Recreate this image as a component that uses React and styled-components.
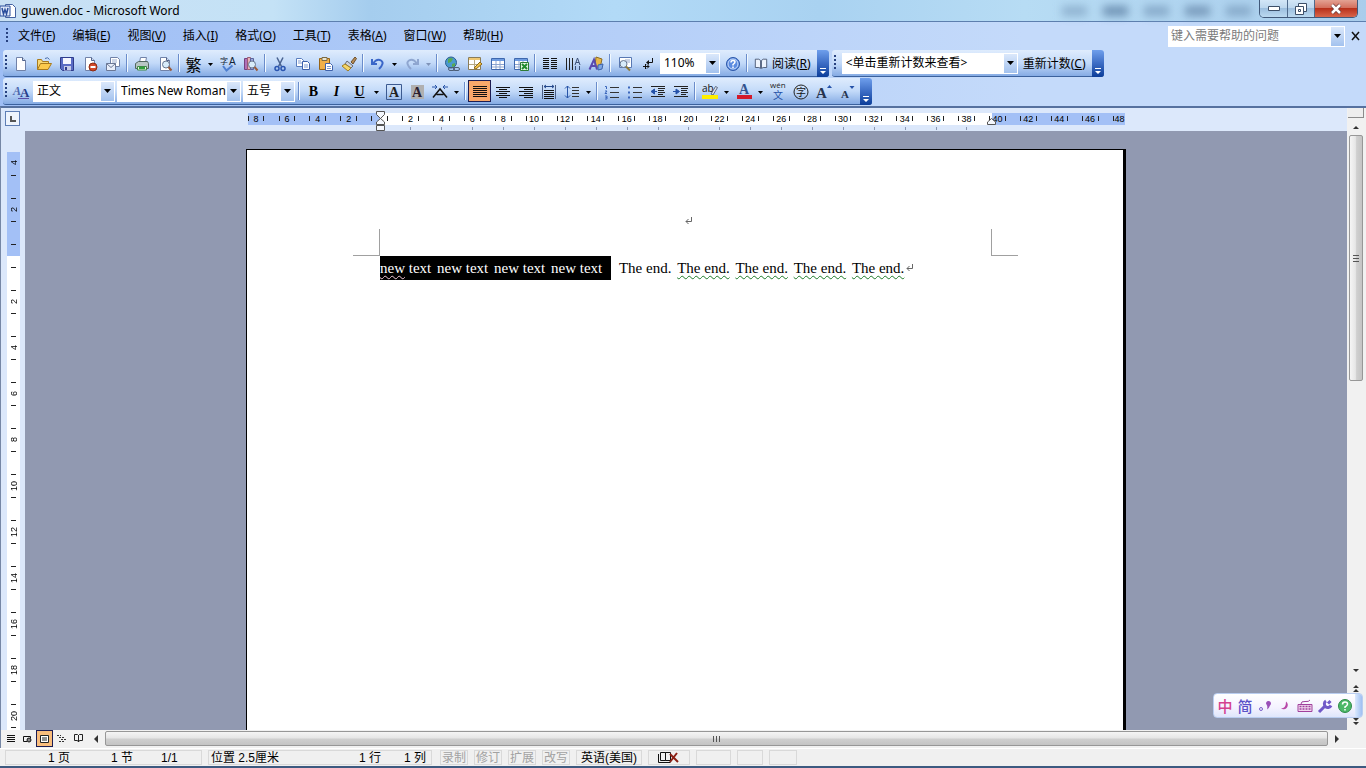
// library imports
import styled, { createGlobalStyle, css } from "styled-components";

const uiFont = `"Noto Sans", "Noto Sans CJK SC", sans-serif`;

const GlobalStyle = createGlobalStyle`
  * {
    box-sizing: border-box;
  }
  html, body, #root {
    height: 100%;
  }
  body {
    margin: 0;
    overflow: hidden;
    font-family: ${uiFont};
    font-size: 12px;
    line-height: 16px;
    color: #000;
  }
  button, input, select {
    font: inherit;
    color: inherit;
    padding: 0;
    margin: 0;
    border: 0;
    background: none;
    border-radius: 0;
  }
  svg {
    display: block;
    flex: none;
    overflow: visible;
  }
`;

const Window = styled.div`
  position: relative;
  display: flex;
  flex-direction: column;
  height: 100vh;
  overflow: hidden;
  background: #dce8fb;
`;

/* title bar */

const TitleBar = styled.header`
  display: flex;
  align-items: center;
  height: 22px;
  flex: none;
  padding-right: 8px;
  border-bottom: 1px solid #5d7fae;
  background: linear-gradient(90deg, #c9e0f4 0, #c4e2f6 20%, #a5cdee 27%, #b2daf7 45%, #a9d2f1 60%, #b7dcf4 75%, #a9cdec 100%);
`;

const Title = styled.h1`
  flex: 1;
  margin: 0 0 0 5px;
  font-size: 12px;
  font-weight: 400;
`;

const Ghosts = styled.div`
  display: flex;
  gap: 16px;
  margin-right: 8px;
  filter: blur(4px);
`;

const Ghost = styled.span`
  width: 25px;
  height: 10px;
  background: ${(props) => props.$tone};
`;

const WindowButtons = styled.div`
  display: flex;
  align-self: flex-start;
  height: 18px;
  border: 1px solid #41597a;
  border-top: 0;
  border-radius: 0 0 5px 5px;
  overflow: hidden;
`;

const WindowButton = styled.button`
  display: flex;
  align-items: center;
  justify-content: center;
  width: ${(props) => (props.$close ? 43 : 27)}px;
  border-left: ${(props) => (props.$first ? 0 : 1)}px solid #4f6a8c;
  background: ${(props) =>
    props.$close
      ? "linear-gradient(#e3a293 0, #d4705e 45%, #b8311b 50%, #d9664b 100%)"
      : "linear-gradient(#d3e6f7 0, #bdd7ee 45%, #9dbfdf 50%, #bbd9f0 100%)"};
`;

/* menus and toolbars */

const MenuBar = styled.nav`
  display: flex;
  align-items: center;
  height: 28px;
  flex: none;
  padding: 0 6px 0 4px;
  background: linear-gradient(90deg, #9ebef5, #c4dafa 75%);
`;

const Menus = styled.div`
  display: flex;
  flex: 1;
  gap: 17px;
  padding-left: 8px;
`;

const MenuButton = styled.button`
  white-space: nowrap;
`;

const HelpBox = styled.div`
  display: flex;
  width: 177px;
  height: 21px;
  margin-right: 6px;
  background: #fff;
`;

const HelpInput = styled.input`
  flex: 1;
  min-width: 0;
  padding-left: 3px;
  outline: 0;
  &::placeholder {
    color: #7b7b7b;
    opacity: 1;
  }
`;

const Dock = styled.div`
  display: flex;
  flex: none;
  gap: 3px;
  height: 28px;
  padding-left: 3px;
  background: linear-gradient(90deg, #9ebef5, #c4dafa 75%);
`;

const Bar = styled.div`
  display: flex;
  align-items: center;
  height: 27px;
  border-bottom: 1px solid #3b619c;
  border-radius: 3px 3px 3px 3px;
  background: linear-gradient(#dfecfd 0, #c3daf9 50%, #85abe4 100%);
`;

const Grip = styled.span`
  width: 3px;
  height: 16px;
  flex: none;
  margin: 0 ${(props) => props.$after || 1}px 0 2px;
  background: repeating-linear-gradient(#27417f 0 2px, transparent 2px 4px);
  background-size: 2px 16px;
  background-repeat: no-repeat;
`;

const IconButton = styled.button`
  display: flex;
  align-items: center;
  justify-content: center;
  width: 23px;
  height: 22px;
  flex: none;
  padding-top: 2px;
  ${(props) =>
    props.$on &&
    css`
      padding-top: 0;
      border: 1px solid #1c1c52;
      background: #f9a86a;
    `}
`;

const ArrowButton = styled.button`
  display: flex;
  align-items: center;
  justify-content: center;
  width: 11px;
  height: 22px;
  flex: none;
  padding-top: 2px;
  color: ${(props) => (props.$dim ? "#7f93b8" : "#000")};
`;

const Separator = styled.span`
  width: 2px;
  height: 18px;
  flex: none;
  margin: 0 2px;
  background: linear-gradient(90deg, #6a8ccb 50%, #f1f9ff 50%);
`;

const TextButton = styled.button`
  display: flex;
  align-items: center;
  gap: 4px;
  height: 22px;
  padding: 2px 4px 0;
  white-space: nowrap;
`;

const ComboBox = styled.label`
  display: flex;
  width: ${(props) => props.$width}px;
  height: 21px;
  flex: none;
  margin: 0 1px;
  background: #fff;
`;

const Select = styled.select`
  flex: 1;
  min-width: 0;
  padding-left: 4px;
  appearance: none;
  overflow: hidden;
  text-overflow: clip;
  outline: 0;
`;

const ComboArrow = styled.span`
  display: flex;
  align-items: center;
  justify-content: center;
  width: 13px;
  margin: 1px;
  background: linear-gradient(#dbe8fb, #a3c2ee);
`;

const BarEnd = styled.button`
  display: flex;
  align-items: flex-end;
  justify-content: center;
  width: 12px;
  height: 27px;
  flex: none;
  margin-left: 2px;
  padding-bottom: 2px;
  border-radius: 0 3px 3px 0;
  background: linear-gradient(#6f9fec, #3c6cc4 50%, #0b3d99);
`;

/* rulers */

const Main = styled.main`
  display: flex;
  flex: 1;
  min-height: 0;
  border-top: 2px solid #56719f;
  border-left: 1px solid #7687a5;
`;

const Editor = styled.div`
  display: flex;
  flex-direction: column;
  flex: 1;
  min-width: 0;
`;

const RulerRow = styled.div`
  display: flex;
  height: 23px;
  flex: none;
  background: #dce8fb;
`;

const TabButton = styled.button`
  display: flex;
  align-items: center;
  justify-content: center;
  width: 15px;
  height: 15px;
  margin: 3px 5px 0 4px;
  flex: none;
  border: 1px solid #5e7eb5;
  background: #eef4fd;
`;

const RulerTrack = styled.div`
  display: flex;
  flex: 1;
  justify-content: center;
  min-width: 0;
`;

const Ruler = styled.div`
  position: relative;
  display: grid;
  grid-template-columns: 24px repeat(27, 1fr) 19px;
  width: 877px;
  height: 12px;
  flex: none;
  margin-top: 5px;
  font: 9px/12px "Liberation Sans", sans-serif;
  background: linear-gradient(90deg, #a3c0f6 133px, #fff 133px 744px, #a3c0f6 744px);
`;

const RulerCell = styled.div`
  position: relative;
  display: flex;
  align-items: center;
  justify-content: space-between;
  min-width: 0;
  height: 11px;
  padding: 0 ${(props) => (props.$last ? 0 : 7)}px 0 ${(props) => (props.$first ? 0 : 7)}px;
  white-space: nowrap;
`;

const RulerTick = styled.span`
  width: 1px;
  height: 5px;
  flex: none;
  background: #222;
`;

const TabStop = styled.span`
  position: absolute;
  left: 50%;
  top: 14px;
  width: 1px;
  height: 3px;
  background: #8a97b3;
`;

const IndentMarker = styled.svg`
  position: absolute;
  top: -2px;
  left: ${(props) => props.$left}px;
`;

const Body = styled.div`
  display: flex;
  flex: 1;
  min-height: 0;
`;

const SideRuler = styled.div`
  width: 24px;
  flex: none;
  padding: 21px 5px 0 6px;
  overflow: hidden;
  background: #dce8fb;
`;

const SideTrack = styled.div`
  display: flex;
  flex-direction: column;
  font: 9px/12px "Liberation Sans", sans-serif;
  background: linear-gradient(#a3c0f6 104px, #fff 104px);
`;

const SideCell = styled.div`
  display: flex;
  flex-direction: column;
  align-items: center;
  justify-content: space-between;
  height: ${(props) => (props.$first ? 35 : 46)}px;
  flex: none;
  padding: ${(props) => (props.$first ? 8 : 11)}px 0 11px;
`;

const SideTick = styled.span`
  width: 5px;
  height: 1px;
  background: #222;
`;

const SideNumber = styled.span`
  writing-mode: vertical-rl;
  transform: rotate(180deg);
`;

/* document */

const Workspace = styled.div`
  display: flex;
  justify-content: center;
  flex: 1;
  min-width: 0;
  padding-top: 18px;
  overflow: hidden;
  background: #9199b1;
`;

const Page = styled.article`
  width: 880px;
  min-height: 1200px;
  flex: none;
  border: solid #000;
  border-width: 1px 3px 0 1px;
  background: #fff;
`;

const PageHeader = styled.div`
  display: grid;
  grid-template-columns: 133px 1fr 132px;
  align-items: end;
  justify-items: center;
  height: 106px;
`;

const Corner = styled.span`
  width: 27px;
  height: 27px;
  border-bottom: 1px solid #a0a0a0;
  ${(props) =>
    props.$right
      ? css`
          justify-self: start;
          border-left: 1px solid #a0a0a0;
        `
      : css`
          justify-self: end;
          border-right: 1px solid #a0a0a0;
        `}
`;

const HeaderMark = styled.span`
  padding: 0 0 31px 7px;
`;

const Paragraph = styled.p`
  display: flex;
  align-items: center;
  margin: 0;
  padding-left: 133px;
  font: 15px/24px "Liberation Serif", serif;
  white-space: pre;
`;

const Selection = styled.span`
  margin-right: 8px;
  padding-right: 3px;
  color: #fff;
  background: #000;
`;

const Phrase = styled.span`
  padding-right: 2px;
`;

const Squiggle = styled.span`
  text-decoration: underline wavy ${(props) => props.$color} 1px;
  text-underline-offset: 2px;
  text-decoration-skip-ink: none;
`;

/* scroll bars */

const ScrollColumn = styled.div`
  display: flex;
  flex-direction: column;
  align-items: center;
  width: 19px;
  flex: none;
  padding: 0 2px 0 1px;
  background: #f1f1f1;
`;

const SplitBox = styled.span`
  width: 16px;
  height: 10px;
  flex: none;
  border: 1px solid #8c8c8c;
  border-width: 0 1px 1px 0;
  background: #eee;
`;

const ScrollButton = styled.button`
  display: flex;
  align-items: center;
  justify-content: center;
  width: ${(props) => props.$width || 16}px;
  height: ${(props) => props.$height || 17}px;
  flex: none;
  color: #333;
`;

const Thumb = styled.span`
  display: flex;
  align-items: center;
  justify-content: center;
  border: 1px solid #979797;
  border-radius: 2px;
  ${(props) =>
    props.$vertical
      ? css`
          width: 14px;
          height: 246px;
          background: linear-gradient(90deg, #f5f5f5 0, #e6e6e6 45%, #cfcfcf 55%, #c4c4c4 100%);
        `
      : css`
          flex: 1;
          height: 15px;
          background: linear-gradient(#f5f5f5 0, #e6e6e6 45%, #cfcfcf 55%, #c4c4c4 100%);
        `}
`;

const Spacer = styled.span`
  flex: 1;
`;

const BottomRow = styled.div`
  display: flex;
  align-items: center;
  height: 18px;
  flex: none;
  padding: 0 20px 1px 1px;
  border-left: 1px solid #7687a5;
  background: #f1f1f1;
`;

const ViewButton = styled.button`
  display: flex;
  align-items: center;
  justify-content: center;
  width: 17px;
  height: 17px;
  flex: none;
  ${(props) =>
    props.$on &&
    css`
      border: 1px solid #1c1c52;
      background: #f9bd7c;
    `}
`;

/* status bar */

const StatusBar = styled.footer`
  display: flex;
  align-items: center;
  height: 20px;
  flex: none;
  padding: 0 5px;
  border-top: 1px solid #fff;
  border-bottom: 2px solid #3d5a80;
  font-family: "Liberation Sans", "Noto Sans CJK SC", sans-serif;
  background: #f0f0f0;
`;

const StatusCell = styled.span`
  display: flex;
  align-items: center;
  justify-content: ${(props) => (props.$start ? "flex-start" : "center")};
  width: ${(props) => props.$width}px;
  height: 15px;
  flex: none;
  margin-right: ${(props) => props.$after || 6}px;
  padding-left: ${(props) => props.$start || 0}px;
  border: 1px solid #d9d9d9;
  white-space: pre;
  color: ${(props) => (props.$dim ? "#a2a2a2" : "#000")};
`;

const Count = styled.span`
  width: ${(props) => props.$width}px;
`;

/* floating input method bar */

const ImeBar = styled.div`
  position: absolute;
  right: 3px;
  bottom: 50px;
  display: flex;
  align-items: center;
  height: 25px;
  padding-left: 1px;
  border: 1px solid #b9cdf0;
  border-radius: 4px;
  overflow: hidden;
  background: linear-gradient(#fff, #f4f2ff 60%, #dfe6fb);
`;

const ImeButton = styled.button`
  display: flex;
  align-items: center;
  justify-content: center;
  width: 20px;
  height: 23px;
  font-size: 15px;
  font-weight: 500;
  color: ${(props) => props.$color};
`;

const ImeHandle = styled.span`
  width: 7px;
  height: 23px;
  background: linear-gradient(90deg, #dbe9fd, #9fc0f2);
`;

/* drawings, all on a 16 unit square */

const Icon = ({ children, size = 16 }) => (
  <svg width={size} height={size} viewBox="0 0 16 16" fill="none">
    {children}
  </svg>
);

const sheet = (
  <>
    <path d="M3.5 1.5h6l3 3v10h-9z" fill="#fff" stroke="#7182a8" />
    <path d="M9.5 1.5v3h3" fill="#cfdcf2" stroke="#52648c" />
  </>
);

const lens = (
  <>
    <circle cx="9" cy="8.500" r="3.500" fill="#d8ecfa" stroke="#66768f" />
    <path d="M11.500 11l3 3.500" stroke="#9a5b3a" strokeWidth="2" />
  </>
);

const grid = (
  <>
    <path d="M1.500 2.500h13v11h-13z" fill="#fff" stroke="#3e68ae" />
    <path d="M2 3h12v2H2z" fill="#6d9be0" />
    <path d="M2 8.500h12M2 11h12M6 5v8M10 5v8" stroke="#8ba4cf" />
  </>
);

const lines = (rows) => (
  <>
    {rows.map(([from, to], i) => (
      <path key={i} d={`M${from} ${3.5 + i * 2}H${to}`} stroke="#111" />
    ))}
  </>
);

const icons = {
  newFile: sheet,
  open: (
    <>
      <path d="M1.500 13.500v-10h4l1 2h6v2" fill="#f7d774" stroke="#a87a1c" />
      <path d="M1.500 13.500l3-6h11l-3.500 6z" fill="#fbc94c" stroke="#a87a1c" />
      <path d="M9 2.500q3-2 4.500 1" stroke="#4a6da8" />
    </>
  ),
  save: (
    <>
      <path d="M1.500 1.500h13v13h-11l-2-2z" fill="#5a6cc4" stroke="#2e3c8c" />
      <path d="M4 2h8v6H4z" fill="#f4f6ff" />
      <path d="M5 10h7v4.500H5z" fill="#c6cce8" />
      <path d="M6 11h2v3H6z" fill="#2e3c8c" />
    </>
  ),
  permission: (
    <>
      {sheet}
      <circle cx="11" cy="11" r="4" fill="#d2492a" stroke="#8d2a12" />
      <path d="M8.500 11h5" stroke="#fff" strokeWidth="2" />
    </>
  ),
  mail: (
    <>
      <path d="M5.500 1.500h7l2 2v7h-9z" fill="#fff" stroke="#7182a8" />
      <path d="M7 4h5M7 6h5" stroke="#9badcf" />
      <path d="M1.500 7.500h9v7h-9z" fill="#e8eefa" stroke="#6b7896" />
      <path d="M1.500 7.500l4.500 4 4.500-4" stroke="#6b7896" />
    </>
  ),
  print: (
    <>
      <path d="M5.500 6.500l1-5h6l-1 5z" fill="#fff" stroke="#7182a8" />
      <path d="M1.500 7.500l3-2h9l1 2v5h-13z" fill="#b8c6c4" stroke="#51665f" />
      <path d="M3.500 10.500h9v3.500h-9z" fill="#e6f2e2" stroke="#3f8a45" />
      <path d="M5 12h6" stroke="#2fa03c" strokeWidth="2" />
    </>
  ),
  preview: (
    <>
      {sheet}
      {lens}
    </>
  ),
  spelling: (
    <>
      <path d="M3 10l3.500 4.500 6-5" stroke="#4e7fd0" strokeWidth="2" />
      <text x="0" y="8" fontSize="8" fill="#123" fontFamily="Noto Sans CJK SC">字</text>
      <text x="9" y="9" fontSize="10" fill="#123" fontFamily="Liberation Sans">A</text>
    </>
  ),
  research: (
    <>
      <path d="M1.500 2.500h3v11h-3z" fill="#b070b8" stroke="#75427f" />
      <path d="M4.500 1.500h3v12h-3z" fill="#e6b0b8" stroke="#9a5b72" />
      <path d="M7.500 2.500h3v11h-3z" fill="#9ca8dc" stroke="#5b659c" />
      {lens}
    </>
  ),
  cut: (
    <>
      <path d="M5 1.500l4.500 9M11 1.500L6.500 10.500" stroke="#48618f" strokeWidth="1.500" />
      <circle cx="5" cy="12.500" r="2" stroke="#2a55b0" strokeWidth="1.500" />
      <circle cx="11" cy="12.500" r="2" stroke="#2a55b0" strokeWidth="1.500" />
    </>
  ),
  copy: (
    <>
      <path d="M1.500 2.500h5l2 2v6h-7z" fill="#fff" stroke="#5a7dbd" />
      <path d="M3 5h3M3 7h4" stroke="#7d9bd2" />
      <path d="M7.500 5.500h5l2 2v6h-7z" fill="#fff" stroke="#3f62ab" />
      <path d="M9 9h4M9 11h4" stroke="#7d9bd2" />
    </>
  ),
  paste: (
    <>
      <path d="M1.500 2.500h10v11h-10z" fill="#f0b04a" stroke="#976416" />
      <path d="M4 1.500h5v3H4z" fill="#e8e4d2" stroke="#7a6a44" />
      <path d="M7.500 7.500h5l2 2v5h-7z" fill="#fff" stroke="#3f62ab" />
      <path d="M9 10.500h4M9 12.500h4" stroke="#7d9bd2" />
    </>
  ),
  painter: (
    <>
      <path d="M10 6l4-5 1.500 1.500L12 8z" fill="#b58b56" stroke="#6d4f2b" />
      <path d="M6 5l6 5-2 2-6-4z" fill="#cfd2d8" stroke="#666c7a" />
      <path d="M4 8l6 4-3 3-6-5z" fill="#f5d668" stroke="#a37e1f" />
    </>
  ),
  undo: <path d="M2 3v5h5M3 7.500Q7 2 11 4.500T9 13" stroke="#3a66c8" strokeWidth="2" />,
  redo: <path d="M14 3v5H9M13 7.500Q9 2 5 4.500T7 13" stroke="#8fa6d0" strokeWidth="2" />,
  link: (
    <>
      <circle cx="7" cy="6.500" r="5.500" fill="#4a9ad0" stroke="#2b5d8e" />
      <path d="M4 3q3-2 5 0l-2 3-3 1zM8 8l3-1v3l-3 1z" fill="#58a953" />
      <rect x="4.500" y="11.500" width="6" height="3" rx="1.500" stroke="#4c5d76" />
      <rect x="9.500" y="11.500" width="6" height="3" rx="1.500" stroke="#4c5d76" />
    </>
  ),
  tables: (
    <>
      <path d="M1.500 1.500h12v12h-12z" fill="#fff" stroke="#8a7c58" />
      <path d="M2 2h11v2H2z" fill="#efc873" />
      <path d="M2 8.500h11M7.500 4v9" stroke="#b7a985" />
      <path d="M7 12l6-6 2 2-6 5z" fill="#f2c24b" stroke="#8d6a1c" />
    </>
  ),
  table: grid,
  excel: (
    <>
      {grid}
      <path d="M7.500 6.500h8v8h-8z" fill="#e4f4e2" stroke="#2d7b35" />
      <path d="M9 8l5 5M14 8l-5 5" stroke="#1f8a2c" strokeWidth="2" />
    </>
  ),
  columns: (
    <path
      d="M1 2.500h6M1 4.500h6M1 6.500h6M1 8.500h6M1 10.500h6M1 12.500h6M9 2.500h6M9 4.500h6M9 6.500h6M9 8.500h6M9 10.500h6M9 12.500h6"
      stroke="#111"
    />
  ),
  direction: (
    <>
      <path d="M1.500 2v12M4.500 2v12M7.500 2v12" stroke="#222" />
      <path d="M10 9l2.500-7L15 9M11 6.500h3M10.500 10v4M14.500 10v4" stroke="#3c5078" />
    </>
  ),
  drawing: (
    <>
      <path d="M8 1l6 2-2 9-5-2z" fill="#e8b84a" stroke="#8b6a20" />
      <path d="M1.500 13.500L6 3.500l3 10M3 10h5" stroke="#5a49ae" strokeWidth="2" />
      <path d="M10 9l5-1-1 5-4 1z" fill="#7ca6e4" stroke="#3d62a8" />
    </>
  ),
  docMap: (
    <>
      <path d="M2.500 1.500h12v10h-12z" fill="#fff" stroke="#5878b3" />
      <path d="M8 4h5M8 6h5" stroke="#93a8cc" />
      <circle cx="6.500" cy="8" r="3.500" fill="#d8ecfa" stroke="#66768f" />
      <path d="M9 10.500l4 4" stroke="#8e7a3a" strokeWidth="2" />
    </>
  ),
  marks: (
    <>
      <path d="M12.500 2v4.500H8" stroke="#111" />
      <path d="M6 6.500l3-2.500v5z" fill="#111" />
      <path d="M3 10.500h6M7 8.500l2 2-2 2" stroke="#111" />
      <path d="M5.500 8v5" stroke="#111" />
    </>
  ),
  help: (
    <>
      <circle cx="8" cy="8" r="6.500" fill="#5b8be0" stroke="#2c57a8" />
      <circle cx="8" cy="8" r="5" stroke="#c9dcfa" />
      <path d="M6 6.500q0-2 2-2t2 1.500q0 1-2 2.500v1M8 10.500V12" stroke="#fff" strokeWidth="1.500" />
    </>
  ),
  book: (
    <path d="M1.500 2.500h4l2 1.500v9l-2-1h-4zM14.500 2.500h-4l-2 1.500v9l2-1h4z" fill="#eef4fd" stroke="#45526e" />
  ),
  styles: (
    <>
      <text x="0" y="11" fontSize="12" fontStyle="italic" fontWeight="700" fill="#4a67ad" fontFamily="Liberation Serif">A</text>
      <text x="7" y="13" fontSize="13" fontWeight="700" fill="#28408a" fontFamily="Liberation Serif">A</text>
      <path d="M5 14.500h11" stroke="#5a4fa8" />
    </>
  ),
  boxedA: (
    <>
      <path d="M.5.5h15v15H.5z" stroke="#3c5a90" />
      <text x="3" y="13" fontSize="14" fontWeight="700" fill="#222" fontFamily="Liberation Serif">A</text>
    </>
  ),
  shadedA: (
    <>
      <path d="M2 1h13v14H2z" fill="#b0b0b0" />
      <text x="3" y="13" fontSize="14" fontWeight="700" fill="#2c2030" fontFamily="Liberation Serif">A</text>
    </>
  ),
  charScale: (
    <>
      <path d="M0 3h5M3 1l2 2-2 2M16 3h-5M13 1l-2 2 2 2" stroke="#2855a8" />
      <path d="M1 13.500L8 5l7 8.500M4.500 10.500h7" stroke="#111" strokeWidth="1.500" />
    </>
  ),
  justify: lines([[1, 15], [1, 15], [1, 15], [1, 15], [1, 15], [1, 15]]),
  center: lines([[1, 15], [4, 12], [1, 15], [4, 12], [1, 15], [4, 12]]),
  right: lines([[1, 15], [6, 15], [1, 15], [6, 15], [1, 15], [6, 15]]),
  distribute: (
    <>
      <path d="M1.500 1v14M14.500 1v14" stroke="#4a5e86" />
      <path d="M3 2.500h10M5 1L3 2.500 5 4M11 1l2 1.500L11 4" stroke="#24488c" />
      <path d="M3 6.500h10M3 8.500h10M3 10.500h10M3 12.500h10M3 14.500h10" stroke="#111" />
    </>
  ),
  spacing: (
    <>
      <path d="M3.500 2v12M1 4.500L3.500 2 6 4.500M1 11.500L3.500 14 6 11.500" stroke="#2855a8" />
      <path d="M8 3.500h7M8 6.500h7M8 9.500h7M8 12.500h7" stroke="#333" />
    </>
  ),
  numbered: (
    <>
      <path d="M6 3.500h9M6 8.500h9M6 13.500h9" stroke="#333" />
      <path d="M1 2.500h1.500V5M1 7h2L1 9.500h2M1 12h2v3H1M1.500 13.500H3" stroke="#3b66bb" />
    </>
  ),
  bullets: (
    <>
      <path d="M6 3.500h9M6 8.500h9M6 13.500h9" stroke="#333" />
      <path d="M1 2.500h2v2H1zM1 7.500h2v2H1zM1 12.500h2v2H1z" fill="#3b66bb" />
    </>
  ),
  outdent: (
    <>
      <path d="M1 2.500h14M8 4.500h7M8 6.500h6M8 8.500h7M8 10.500h5M1 12.500h14" stroke="#222" />
      <path d="M1 7.500L4.500 5v5zM4 7.500h3" fill="#2451a8" stroke="#2451a8" />
    </>
  ),
  indent: (
    <>
      <path d="M1 2.500h14M8 4.500h7M8 6.500h6M8 8.500h7M8 10.500h5M1 12.500h14" stroke="#222" />
      <path d="M6.500 7.500L3 5v5zM0 7.500h3" fill="#2451a8" stroke="#2451a8" />
    </>
  ),
  highlight: (
    <>
      <text x="0" y="8" fontSize="10" fill="#111" fontFamily="Open Sans">ab</text>
      <path d="M9 10l4.500-7.500 2 1L11 11z" fill="#dfe5f0" stroke="#5c6880" />
      <path d="M0 11h16v4H0z" fill="#ffef00" />
    </>
  ),
  fontColor: (
    <>
      <text x="3" y="10" fontSize="14" fontWeight="700" fill="#33538f" fontFamily="Liberation Serif">A</text>
      <path d="M1 11h15v4H1z" fill="#d31a2b" />
    </>
  ),
  phonetic: (
    <>
      <text x="0" y="4" fontSize="8" fill="#222" fontFamily="Open Sans">wén</text>
      <text x="3" y="15" fontSize="10" fill="#2451a8" fontFamily="Noto Sans CJK SC">文</text>
    </>
  ),
  enclosed: (
    <>
      <circle cx="8" cy="8" r="7" stroke="#222" />
      <text x="3" y="12" fontSize="10" fill="#111" fontFamily="Noto Sans CJK SC">字</text>
    </>
  ),
  grow: (
    <>
      <text x="0" y="14" fontSize="15" fontWeight="700" fill="#26344e" fontFamily="Liberation Serif">A</text>
      <path d="M13.500 1l2.500 3h-5z" fill="#2451a8" />
    </>
  ),
  shrink: (
    <>
      <text x="2" y="14" fontSize="11" fontWeight="700" fill="#26344e" fontFamily="Liberation Serif">A</text>
      <path d="M13 5l2.500-3h-5z" fill="#2451a8" />
    </>
  ),
  word: (
    <>
      <path d="M5.500 1.500h7l3 3v10h-10z" fill="#fff" stroke="#4361a0" />
      <path d="M0 3h10v10H0z" fill="#dfe9fa" stroke="#2b4e9b" />
      <path d="M2 5l1.500 6L5 6.500 6.500 11 8 5" stroke="#2b4e9b" strokeWidth="1.500" />
    </>
  ),
};

const Down = () => (
  <svg width="7" height="4" viewBox="0 0 7 4">
    <path d="M0 0h7L3.500 4z" fill="currentColor" />
  </svg>
);

const Mark = () => (
  <svg width="8" height="8" viewBox="0 0 8 8" fill="none">
    <path d="M6.500 0v4.500H1M3.500 2L1 4.500 3.500 7" stroke="#666" />
  </svg>
);

const arrowPaths = {
  up: "M1 6h6L4 3z",
  down: "M1 2h6L4 5z",
  left: "M6 0v8L2 4z",
  right: "M2 0v8l4-4z",
  pageUp: "M1 4h6L4 1zM1 8h6L4 5z",
  pageDown: "M1 0h6L4 3zM1 4h6L4 7z",
};

const ScrollArrow = ({ label, kind, width, height }) => (
  <ScrollButton aria-label={label} $width={width} $height={height}>
    <svg width="8" height="8" viewBox="0 0 8 8">
      <path d={arrowPaths[kind]} fill="currentColor" />
    </svg>
  </ScrollButton>
);

const Combo = ({ label, value, width }) => (
  <ComboBox $width={width}>
    <Select aria-label={label} defaultValue={value}>
      <option>{value}</option>
    </Select>
    <ComboArrow>
      <Down />
    </ComboArrow>
  </ComboBox>
);

const Tool = ({ name, label, on }) => (
  <IconButton aria-label={label || name} $on={on}>
    <Icon>{icons[name]}</Icon>
  </IconButton>
);

const Tools = ({ names }) => names.map((name) => <Tool key={name} name={name} />);

const DropArrow = ({ label, dim }) => (
  <ArrowButton aria-label={label} $dim={dim}>
    <svg width="5" height="3" viewBox="0 0 5 3">
      <path d="M0 0h5L2.500 3z" fill="currentColor" />
    </svg>
  </ArrowButton>
);

const ToolbarEnd = () => (
  <BarEnd aria-label="工具栏选项">
    <svg width="8" height="8" viewBox="0 0 8 8">
      <path d="M1 1h6v1H1zM1 4h6L4 7z" fill="#fff" />
    </svg>
  </BarEnd>
);

const GlyphButton = styled(IconButton)`
  font-family: ${(props) => (props.$cjk ? `"Noto Sans CJK SC", sans-serif` : `"Liberation Serif", serif`)};
  font-size: ${(props) => (props.$cjk ? 16 : 14)}px;
  font-weight: ${(props) => (props.$cjk ? 400 : 700)};
  font-style: ${(props) => (props.$italic ? "italic" : "normal")};
  text-decoration: ${(props) => (props.$underline ? "underline" : "none")};
`;

const menus = [
  ["文件", "F"],
  ["编辑", "E"],
  ["视图", "V"],
  ["插入", "I"],
  ["格式", "O"],
  ["工具", "T"],
  ["表格", "A"],
  ["窗口", "W"],
  ["帮助", "H"],
];

const rulerNumbers = [8, 6, 4, 2, 0, ...Array.from({ length: 24 }, (_, i) => (i + 1) * 2)];
const sideNumbers = [4, 2, 0, ...Array.from({ length: 10 }, (_, i) => (i + 1) * 2)];
const modes = ["录制", "修订", "扩展", "改写"];

const TopRuler = () => (
  <RulerRow>
    <TabButton aria-label="制表符">
      <svg width="7" height="7" viewBox="0 0 7 7">
        <path d="M2 1v5h5" fill="none" stroke="#555" strokeWidth="2" />
      </svg>
    </TabButton>
    <RulerTrack>
      <Ruler>
        {rulerNumbers.map((number, i) => {
          const last = i === rulerNumbers.length - 1;
          return (
            <RulerCell key={i} $first={i === 0} $last={last}>
              <RulerTick />
              {number > 0 && <span>{number}</span>}
              {!last && <RulerTick />}
              {i > 4 && i < 24 && <TabStop />}
            </RulerCell>
          );
        })}
        <IndentMarker $left={127} width="11" height="21" viewBox="0 0 11 21" fill="#f4f7fd" stroke="#555">
          <path d="M1.500.5h8v3l-4 4-4-4zM1.500 13.500v-2.500l4-3.500 4 3.500v2.500zM1.500 14.500h8v5h-8z" />
        </IndentMarker>
        <IndentMarker $left={738} width="11" height="21" viewBox="0 0 11 21" fill="#f4f7fd" stroke="#555">
          <path d="M1.500 13.500v-2.500l4-3.500 4 3.500v2.500z" />
        </IndentMarker>
      </Ruler>
    </RulerTrack>
  </RulerRow>
);

const LeftRuler = () => (
  <SideRuler>
    <SideTrack>
      {sideNumbers.map((number, i) => (
        <SideCell key={i} $first={i === 0}>
          {i > 0 && <SideTick />}
          {number > 0 && <SideNumber>{number}</SideNumber>}
          <SideTick />
        </SideCell>
      ))}
    </SideTrack>
  </SideRuler>
);

const Document = () => (
  <Workspace>
    <Page>
      <PageHeader>
        <Corner />
        <HeaderMark>
          <Mark />
        </HeaderMark>
        <Corner $right />
      </PageHeader>
      <Paragraph>
        <Selection>
          <Phrase>
            <Squiggle $color="#f0c8d8">new</Squiggle> text{" "}
          </Phrase>
          <Phrase>new text </Phrase>
          <Phrase>new text </Phrase>
          <Phrase>new text </Phrase>
        </Selection>
        <Phrase>The end. </Phrase>
        {[2, 3, 4, 5].map((n) => (
          <Phrase key={n}>
            <Squiggle $color="#1c7a28">The end.</Squiggle>
            {n < 5 && " "}
          </Phrase>
        ))}
        <Mark />
      </Paragraph>
    </Page>
  </Workspace>
);

const App = () => {
  return (
    <Window>
      <GlobalStyle />
      <TitleBar>
        <Icon>{icons.word}</Icon>
        <Title>guwen.doc - Microsoft Word</Title>
        <Ghosts aria-hidden="true">
          <Ghost $tone="#8fb2d0" />
          <Ghost $tone="#6f92b4" />
          <Ghost $tone="#86a9c9" />
          <Ghost $tone="#7799ba" />
          <Ghost $tone="#86a9c9" />
        </Ghosts>
        <WindowButtons>
          <WindowButton $first aria-label="最小化">
            <svg width="12" height="5" viewBox="0 0 12 5">
              <path d="M.5.5h11v4H.5z" fill="#fff" stroke="#3d4f68" />
            </svg>
          </WindowButton>
          <WindowButton aria-label="还原">
            <svg width="12" height="12" viewBox="0 0 12 12" fill="#fff" stroke="#3d4f68">
              <path d="M3.500.5h8v8h-8z" />
              <path d="M.5 3.500h8v8h-8zM3.500 6.500h2v2h-2z" />
            </svg>
          </WindowButton>
          <WindowButton $close aria-label="关闭">
            <svg width="12" height="10" viewBox="0 0 12 10" fill="none">
              <path d="M2 1l8 8M10 1L2 9" stroke="#6b3a38" strokeWidth="4" />
              <path d="M2 1l8 8M10 1L2 9" stroke="#fff" strokeWidth="2.500" />
            </svg>
          </WindowButton>
        </WindowButtons>
      </TitleBar>

      <MenuBar>
        <Grip />
        <Menus>
          {menus.map(([name, key]) => (
            <MenuButton key={key}>
              {name}(<u>{key}</u>)
            </MenuButton>
          ))}
        </Menus>
        <HelpBox>
          <HelpInput aria-label="帮助" placeholder="键入需要帮助的问题" />
          <ComboArrow>
            <Down />
          </ComboArrow>
        </HelpBox>
        <button aria-label="关闭文档">
          <svg width="9" height="8" viewBox="0 0 9 8">
            <path d="M1 0l7 8M8 0L1 8" stroke="#111" strokeWidth="1.500" />
          </svg>
        </button>
      </MenuBar>

      <Dock>
        <Bar>
          <Grip />
          <Tools names={["newFile", "open", "save", "permission", "mail"]} />
          <Separator />
          <Tools names={["print", "preview"]} />
          <Separator />
          <GlyphButton $cjk>繁</GlyphButton>
          <DropArrow label="繁简转换" />
          <Tools names={["spelling", "research"]} />
          <Separator />
          <Tools names={["cut", "copy", "paste", "painter"]} />
          <Separator />
          <Tool name="undo" />
          <DropArrow label="撤消列表" />
          <Tool name="redo" />
          <DropArrow label="恢复列表" dim />
          <Separator />
          <Tools names={["link", "tables", "table", "excel"]} />
          <Separator />
          <Tools names={["columns", "direction", "drawing"]} />
          <Separator />
          <Tools names={["docMap", "marks"]} />
          <Combo label="显示比例" value="110%" width={60} />
          <Tool name="help" />
          <Separator />
          <TextButton>
            <Icon size={14}>{icons.book}</Icon>
            <span>
              阅读(<u>R</u>)
            </span>
          </TextButton>
          <ToolbarEnd />
        </Bar>
        <Bar>
          <Grip $after={4} />
          <Combo label="字数统计" value="<单击重新计数来查看>" width={176} />
          <TextButton>
            <span>
              重新计数(<u>C</u>)
            </span>
          </TextButton>
          <ToolbarEnd />
        </Bar>
      </Dock>

      <Dock>
        <Bar>
          <Grip />
          <Tool name="styles" />
          <Combo label="样式" value="正文" width={82} />
          <Combo label="字体" value="Times New Roman" width={124} />
          <Combo label="字号" value="五号" width={52} />
          <Separator />
          <GlyphButton>B</GlyphButton>
          <GlyphButton $italic>I</GlyphButton>
          <GlyphButton $underline>U</GlyphButton>
          <DropArrow label="下划线" />
          <Tools names={["boxedA", "shadedA", "charScale"]} />
          <DropArrow label="字符缩放" />
          <Separator />
          <Tool name="justify" on />
          <Tools names={["center", "right", "distribute", "spacing"]} />
          <DropArrow label="行距" />
          <Separator />
          <Tools names={["numbered", "bullets", "outdent", "indent"]} />
          <Separator />
          <Tool name="highlight" />
          <DropArrow label="突出显示" />
          <Tool name="fontColor" />
          <DropArrow label="字体颜色" />
          <Tools names={["phonetic", "enclosed", "grow", "shrink"]} />
          <ToolbarEnd />
        </Bar>
      </Dock>

      <Main>
        <Editor>
          <TopRuler />
          <Body>
            <LeftRuler />
            <Document />
          </Body>
        </Editor>
        <ScrollColumn>
          <SplitBox />
          <ScrollArrow label="向上滚动" kind="up" />
          <Thumb $vertical>
            <svg width="6" height="7" viewBox="0 0 6 7">
              <path d="M0 .5h6M0 3.500h6M0 6.500h6" stroke="#555" />
            </svg>
          </Thumb>
          <Spacer />
          <ScrollArrow label="向下滚动" kind="down" />
          <ScrollArrow label="前一页" kind="pageUp" />
          <ScrollArrow label="选择浏览对象" kind="down" />
          <ScrollArrow label="下一页" kind="pageDown" />
        </ScrollColumn>
      </Main>

      <BottomRow>
        <ViewButton aria-label="普通视图">
          <svg width="8" height="8" viewBox="0 0 8 8">
            <path d="M0 .5h8M0 2.500h8M0 4.500h8M0 6.500h8" stroke="#111" />
          </svg>
        </ViewButton>
        <ViewButton aria-label="Web 版式视图">
          <svg width="9" height="8" viewBox="0 0 9 8" fill="none" stroke="#111">
            <path d="M4 6.500H.5v-5h7V3" />
            <circle cx="6" cy="5" r="2" fill="#888" />
          </svg>
        </ViewButton>
        <ViewButton $on aria-label="页面视图">
          <svg width="9" height="8" viewBox="0 0 9 8" fill="#fff" stroke="#222">
            <path d="M.5.5h8v7h-8zM2 3h5M2 5h5" />
          </svg>
        </ViewButton>
        <ViewButton aria-label="大纲视图">
          <svg width="9" height="8" viewBox="0 0 9 8">
            <path d="M0 .5h4M2 2.500h6M4 4.500h5M2 6.500h6" stroke="#333" strokeDasharray="2 1" />
          </svg>
        </ViewButton>
        <ViewButton aria-label="阅读版式">
          <svg width="9" height="9" viewBox="0 0 9 9" fill="none" stroke="#222">
            <path d="M.5.500h3l1 1 1-1h3v6h-3l-1 1.500-1-1.500h-3zM4.500 1v7" />
          </svg>
        </ViewButton>
        <ScrollArrow label="向左滚动" kind="left" width={18} />
        <Thumb>
          <svg width="7" height="6" viewBox="0 0 7 6">
            <path d="M.5 0v6M3.500 0v6M6.500 0v6" stroke="#555" />
          </svg>
        </Thumb>
        <ScrollArrow label="向右滚动" kind="right" width={18} />
      </BottomRow>

      <StatusBar>
        <StatusCell $width={197} $start={42}>
          <Count $width={63}>1 页</Count>
          <Count $width={50}>1 节</Count>
          <Count $width={20}>1/1</Count>
        </StatusCell>
        <StatusCell $width={224} $start={2} $after={8}>
          <Count $width={148}>位置 2.5厘米</Count>
          <Count $width={45}>1 行</Count>
          <Count $width={24}>1 列</Count>
        </StatusCell>
        {modes.map((mode) => (
          <StatusCell key={mode} $width={28} $dim>
            {mode}
          </StatusCell>
        ))}
        <StatusCell $width={66}>英语(美国)</StatusCell>
        <StatusCell $width={42}>
          <svg width="22" height="13" viewBox="0 0 22 13" fill="none">
            <path d="M2.500 1.500h5v8h-5zM7.500 1.500h5v8h-5zM.5 3v8.500h12" stroke="#111" />
            <path d="M12 3l8 8M19 2l-7 9" stroke="#8c2015" strokeWidth="2" />
          </svg>
        </StatusCell>
        <StatusCell $width={35} />
        <StatusCell $width={26} />
        <StatusCell $width={28} />
      </StatusBar>

      <ImeBar>
        <ImeButton $color="#d4408e">中</ImeButton>
        <ImeButton $color="#5a50c8">简</ImeButton>
        <ImeButton aria-label="标点">
          <Icon>
            <circle cx="4" cy="11" r="1.500" stroke="#7a60c8" />
            <path d="M9 5.500a2.500 2.500 0 1 1 4 2q-1 3-3 4 1-3-1-6z" fill="#9a50b8" />
          </Icon>
        </ImeButton>
        <ImeButton aria-label="半角">
          <Icon>
            <path d="M9 3.500a4 4 0 1 1-5 7q5 0 5-7z" fill="#b848a8" />
          </Icon>
        </ImeButton>
        <ImeButton aria-label="软键盘">
          <Icon>
            <path d="M1 6.500h14v7H1z" fill="#f2d8f0" stroke="#a0409c" />
            <path d="M2.500 8.500h11M2.500 11h11" stroke="#a0409c" strokeDasharray="2 1" strokeWidth="1.500" />
            <path d="M4 6q0-3 4-2.500T13 2" stroke="#a0409c" />
          </Icon>
        </ImeButton>
        <ImeButton aria-label="设置">
          <Icon>
            <path d="M2 14l7-7M13.500 3L11 5.500M9 3a3.500 3.500 0 1 0 5 4.500" stroke="#7058c8" strokeWidth="3" />
          </Icon>
        </ImeButton>
        <ImeButton aria-label="帮助">
          <Icon>
            <circle cx="8" cy="8" r="6.500" fill="#4cb868" stroke="#2f8a48" />
            <path d="M5.500 6.500q0-2.500 2.500-2.500t2.500 2q0 1.500-2.500 3v1M8 11v1.500" stroke="#fff" strokeWidth="1.500" />
          </Icon>
        </ImeButton>
        <ImeHandle />
      </ImeBar>
    </Window>
  );
};

export default App;
